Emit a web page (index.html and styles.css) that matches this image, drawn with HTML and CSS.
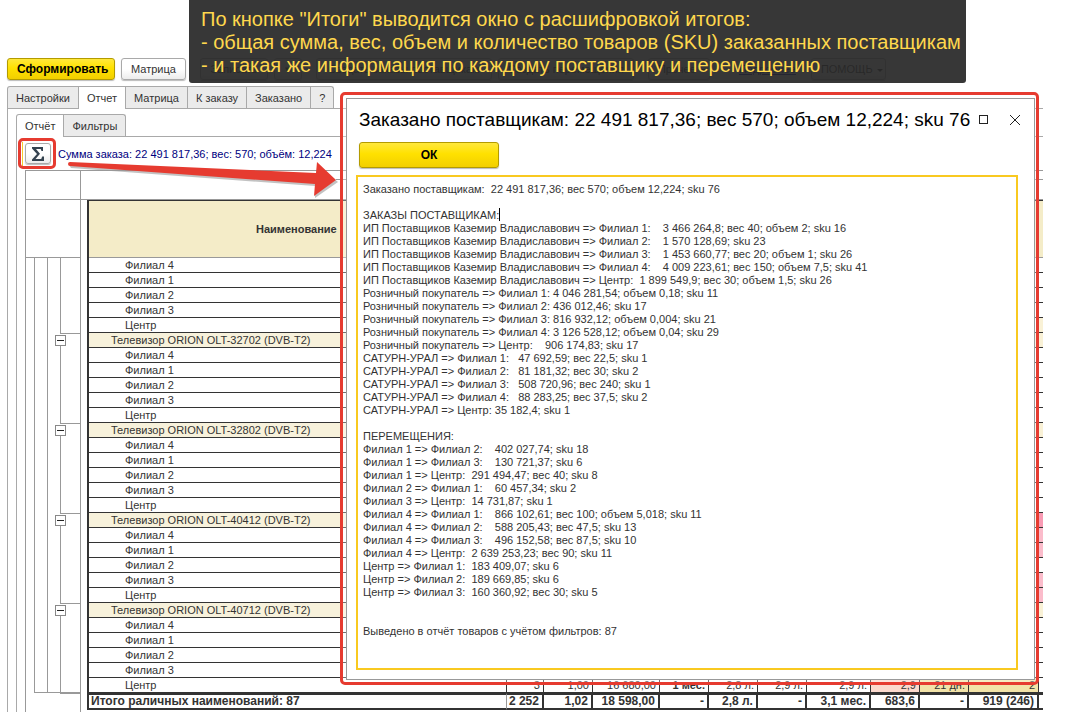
FILE: index.html
```html
<!DOCTYPE html>
<html lang="ru">
<head>
<meta charset="utf-8">
<title>Отчет</title>
<link rel="stylesheet" href="styles.css">
</head>
<body>
<main class="app">
  <div class="toolbar">
    <button class="btn primary generate">Сформировать</button>
    <button class="btn">Матрица</button>
    <button class="btn save">Записать</button>
    <button class="btn small">▾</button>
    <button class="btn orders">Создать заказы поставщикам</button>
    <button class="btn moves">Создать перемещения</button>
    <button class="btn more">Прочее <span class="caret"></span></button>
    <a class="help-link" href="#">Подробнее</a>
    <button class="btn help">ПОМОЩЬ <span class="caret"></span></button>
  </div>
  <nav class="tabs">
    <button class="tab">Настройки</button><button class="tab active">Отчет</button><button class="tab">Матрица</button><button class="tab">К заказу</button><button class="tab">Заказано</button><button class="tab">?</button>
  </nav>
  <section class="panel">
    <nav class="tabs inner">
      <button class="tab active">Отчёт</button><button class="tab">Фильтры</button>
    </nav>
    <section class="panel inner">
      <div class="summary">
        <span class="marker"></span>
        <button class="btn sigma" aria-label="Итоги"><svg width="16" height="16" viewBox="0 0 16 16"><path d="M2 1h11v4h-1.500l-.8-2H6l4 4.800L5.500 13h5.700l1-2.500H14V15H2v-1.500L7 8 2 2.500z" fill="#34424f"/></svg></button>
        <span class="sum-text">Сумма заказа: 22 491 817,36; вес: 570; объём: 12,224</span>
      </div>
      <div class="report">
        <div class="outline">
          <div class="outline-top"></div>
          <div class="outline-head"></div>
          <div class="tree">
            <div class="level"></div><div class="level"></div>
            <div class="nodes">
              <div class="node first"></div>
              <div class="node"><button class="toggle" aria-label="Свернуть"></button></div>
              <div class="node"><button class="toggle" aria-label="Свернуть"></button></div>
              <div class="node"><button class="toggle" aria-label="Свернуть"></button></div>
              <div class="node"><button class="toggle" aria-label="Свернуть"></button></div>
            </div>
          </div>
        </div>
        <div class="sheet">
          <div class="ruler"><div class="bracket"></div></div>
          <table class="grid">
            <colgroup><col class="c-name"><col class="c37"><col class="c49"><col class="c67"><col class="c49"><col class="c49"><col class="c49"><col class="c64"><col class="c49"><col class="c49"><col class="c70"><col class="c4"></colgroup>
            <thead><tr><th colspan="11">Наименование</th><th></th></tr></thead>
            <tbody id="rows"></tbody>
            <tfoot><tr><td class="name">Итого раличных наименований: 87</td><td>2 252</td><td>1,02</td><td>18 598,00</td><td>-</td><td>2,8 л.</td><td>-</td><td>3,1 мес.</td><td>683,6</td><td>-</td><td>919 (246)</td><td></td></tr></tfoot>
          </table>
        </div>
      </div>
    </section>
  </section>
</main>

<aside class="callout">По кнопке "Итоги" выводится окно с расшифровкой итогов:<br>- общая сумма, вес, объем и количество товаров (SKU) заказанных поставщикам<br>- и такая же информация по каждому поставщику и перемещению</aside>

<div class="focus-ring"></div>
<svg class="arrow" width="280" height="50" viewBox="0 0 280 50">
  <path d="M2 9 249 19 251 9 271 26 248 42 248 30 4 12z" fill="#999" opacity=".6"/>
  <path d="M3 6Q1 6 1 8T3 10L248 28 247 40 269 24 250 6 249 17z" fill="#e63b30"/>
</svg>

<div class="frame" role="dialog" aria-labelledby="dialog-title">
  <div class="dialog">
    <header class="dialog-head">
      <h1 id="dialog-title">Заказано поставщикам: 22 491 817,36; вес 570; объем 12,224; sku 76</h1>
      <button class="win" aria-label="Развернуть"><svg width="10" height="10"><rect x=".5" y=".5" width="8" height="8" fill="none" stroke="#222"/></svg></button>
      <button class="win" aria-label="Закрыть"><svg width="10" height="10"><path d="M0 0 10 10M10 0 0 10" stroke="#222"/></svg></button>
    </header>
    <button class="btn primary ok">ОК</button>
    <div class="field">
    <textarea class="details" aria-label="Расшифровка итогов" spellcheck="false">Заказано поставщикам:  22 491 817,36; вес 570; объем 12,224; sku 76

ЗАКАЗЫ ПОСТАВЩИКАМ:
ИП Поставщиков Каземир Владиславович => Филиал 1:    3 466 264,8; вес 40; объем 2; sku 16
ИП Поставщиков Каземир Владиславович => Филиал 2:    1 570 128,69; sku 23
ИП Поставщиков Каземир Владиславович => Филиал 3:    1 453 660,77; вес 20; объем 1; sku 26
ИП Поставщиков Каземир Владиславович => Филиал 4:    4 009 223,61; вес 150; объем 7,5; sku 41
ИП Поставщиков Каземир Владиславович => Центр:  1 899 549,9; вес 30; объем 1,5; sku 26
Розничный покупатель => Филиал 1: 4 046 281,54; объем 0,18; sku 11
Розничный покупатель => Филиал 2: 436 012,46; sku 17
Розничный покупатель => Филиал 3: 816 932,12; объем 0,004; sku 21
Розничный покупатель => Филиал 4: 3 126 528,12; объем 0,04; sku 29
Розничный покупатель => Центр:    906 174,83; sku 17
САТУРН-УРАЛ => Филиал 1:   47 692,59; вес 22,5; sku 1
САТУРН-УРАЛ => Филиал 2:   81 181,32; вес 30; sku 2
САТУРН-УРАЛ => Филиал 3:   508 720,96; вес 240; sku 1
САТУРН-УРАЛ => Филиал 4:   88 283,25; вес 37,5; sku 2
САТУРН-УРАЛ => Центр: 35 182,4; sku 1

ПЕРЕМЕЩЕНИЯ:
Филиал 1 => Филиал 2:    402 027,74; sku 18
Филиал 1 => Филиал 3:    130 721,37; sku 6
Филиал 1 => Центр:  291 494,47; вес 40; sku 8
Филиал 2 => Филиал 1:    60 457,34; sku 2
Филиал 3 => Центр:  14 731,87; sku 1
Филиал 4 => Филиал 1:    866 102,61; вес 100; объем 5,018; sku 11
Филиал 4 => Филиал 2:    588 205,43; вес 47,5; sku 13
Филиал 4 => Филиал 3:    496 152,58; вес 87,5; sku 10
Филиал 4 => Центр:  2 639 253,23; вес 90; sku 11
Центр => Филиал 1:  183 409,07; sku 6
Центр => Филиал 2:  189 669,85; sku 6
Центр => Филиал 3:  160 360,92; вес 30; sku 5


Выведено в отчёт товаров с учётом фильтров: 87</textarea>
    <span class="cursor"></span>
    </div>
  </div>
</div>
<script src="report.js"></script>
</body>
</html>
```

FILE: report.js
```js
const branches = ["Филиал 4", "Филиал 1", "Филиал 2", "Филиал 3", "Центр"];
const models = ["OLT-32702", "OLT-32802", "OLT-40412", "OLT-40712"];
const tints = { 4: "cream", 5: "cream", 11: "cream", 17: "rose", 18: "pink", 19: "pink", 21: "pink", 22: "pink", 23: "cream" };
const lastValues = ["3", "1,00", "16 680,00", "1 мес.", "2,8 л.", "2,9 л.", "2,9 л.", "2,9", "21 дн.", "2"];
const body = document.getElementById("rows");

function addRow(name, kind, values) {
  const tr = document.createElement("tr");
  tr.className = kind;
  const cell = tr.insertCell();
  cell.className = "name";
  cell.textContent = name;
  if (values) {
    values.forEach((v) => { tr.insertCell().textContent = v; });
  } else {
    tr.insertCell().colSpan = 10;
  }
  tr.insertCell().className = tints[body.rows.length] || "";
  body.append(tr);
}

branches.forEach((b) => addRow(b, "leaf"));
models.forEach((m, i) => {
  addRow("Телевизор ORION " + m + " (DVB-T2)", "product");
  branches.forEach((b, j) => {
    const last = i === models.length - 1 && j === branches.length - 1;
    addRow(b, last ? "leaf last" : "leaf", last ? lastValues : null);
  });
});
```

FILE: styles.css
```css
* { box-sizing: border-box; }
body {
  margin: 0;
  position: relative;
  height: 100vh;
  overflow: hidden;
  background: #fff;
  color: #333;
  font: 11px/16px "Liberation Sans", Arial, sans-serif;
}
button { font: inherit; color: inherit; margin: 0; padding: 0; }
.app { padding: 58px 33px 0 7px; height: 100%; overflow: hidden; }

.toolbar { display: flex; gap: 6px; height: 22px; }
.btn {
  flex: none;
  height: 22px;
  padding: 0 9px;
  border: 1px solid #a9a9a9;
  border-radius: 3px;
  background: linear-gradient(#fff 50%, #ececec);
  box-shadow: 0 1px 1px #bbb;
  white-space: nowrap;
  overflow: hidden;
}
.btn.primary {
  border-color: #b39b00;
  background: linear-gradient(#ffe83c, #ffe100 45%, #f2cf00);
  color: #000;
  font-size: 12px;
  font-weight: bold;
}
.generate { width: 108px; }
.save { width: 68px; margin-left: 8px; }
.small { width: 28px; }
.orders { width: 176px; margin-left: 8px; }
.moves { width: 136px; }
.more { width: 62px; margin-left: 8px; }
.help-link { align-self: center; width: 56px; margin: 0 10px 0 23px; color: #00a; }
.btn.help { width: 75px; }
.caret { display: inline-block; margin-left: 1px; border: 3px solid transparent; border-top-color: #333; border-bottom: 0; vertical-align: middle; }

.tabs { display: flex; height: 22px; margin-top: 6px; }
.tab {
  height: 22px;
  padding: 0 8px;
  border: 1px solid #a9a9a9;
  border-left-width: 0;
  border-bottom: 0;
  background: #ebebeb;
  white-space: nowrap;
}
.tab:first-child { border-left-width: 1px; border-top-left-radius: 3px; }
.tab:last-child { border-top-right-radius: 3px; }
.tab.active { height: 23px; background: #fff; z-index: 1; }
.panel { border: 1px solid #a9a9a9; border-width: 1px 0 0 1px; padding-left: 8px; }
.panel.inner { padding-left: 0; }
.tabs.inner { margin-top: 5px; }

.summary { display: flex; align-items: center; height: 33px; padding-left: 5px; }
.marker { width: 1px; height: 24px; background: #f7c92b; }
.sigma { width: 26px; height: 21px; margin: 0 7px 0 2px; padding: 0; display: grid; place-items: center; }
.sum-text { color: #000080; white-space: nowrap; }

.report { display: flex; margin-left: 8px; border: 1px solid #999; border-width: 1px 0 0 1px; }
.outline { flex: none; width: 55px; height: 545px; border-right: 1px solid #999; }
.outline-top { height: 29px; border-bottom: 1px solid #999; }
.outline-head { height: 58px; border-bottom: 1px solid #999; }
.tree { display: flex; height: 435px; padding-left: 8px; }
.level { width: 13px; border: 1px solid #999; border-width: 0 0 1px 1px; }
.nodes { flex: 1; border-bottom: 1px solid #999; }
.node { height: 90px; padding-top: 2px; }
.node.first { height: 75px; padding: 0; }
.node::after { content: ""; display: block; height: 77px; border: 1px solid #999; border-width: 0 0 1px 1px; }
.node.first::after { height: 75px; }
.toggle {
  display: grid;
  place-items: center;
  width: 11px;
  height: 11px;
  margin-left: -5px;
  border: 1px solid #888;
  background: #fff;
}
.toggle::before { content: ""; width: 7px; height: 1px; background: #222; }

.sheet { flex: 1; min-width: 0; }
.ruler { height: 29px; border-bottom: 1px solid #999; padding: 8px 0 0 255px; }
.bracket { border-top: 1px solid #999; }
.grid {
  width: calc(100% - 6px);
  margin-left: 6px;
  table-layout: fixed;
  border-collapse: separate;
  border-spacing: 0;
  border-left: 2px solid #333;
  line-height: 14px;
}
.c37 { width: 37px; } .c49 { width: 49px; } .c67 { width: 67px; }
.c64 { width: 64px; } .c70 { width: 70px; } .c4 { width: 4px; }
th { height: 58px; padding: 0 0 0 167px; text-align: left; background: #f4ecc8; border-top: 1px solid #333; border-bottom: 1px solid #999; }
th:last-child { padding: 0; }
td { height: 15px; padding: 0 3px 0 0; border-bottom: 1px solid #333; border-right: 1px solid #333; text-align: right; white-space: nowrap; overflow: hidden; }
td:last-child { border-right: 0; padding: 0; }
td.name { text-align: left; padding-left: 36px; }
.product td { background: #f7f1db; }
.product td.name { padding-left: 22px; }
tbody .cream, .product .cream { background: #f9f1d6; }
tbody .rose, .product .rose { background: #f99bb4; }
tbody .pink { background: #fbbccb; }
.last td:nth-child(5) { font-weight: bold; }
.last td:nth-child(9) { background: #fbd9cd; }
.last td:nth-child(10), .last td:nth-child(11) { background: #f2e3a8; }
tfoot td { height: 17px; border-top: 2px solid #333; border-bottom: 2px solid #333; border-right-width: 2px; font-size: 12px; line-height: 13px; font-weight: bold; }
tfoot td.name { padding-left: 2px; border-right: 1px solid #999; }

.callout {
  position: absolute;
  left: 189px;
  top: 0;
  padding: 8px 5px 6px 12px;
  border-radius: 0 0 3px 3px;
  background: rgba(40, 40, 40, .93);
  color: #ffd84d;
  font-size: 20px;
  line-height: 23px;
  white-space: nowrap;
}
.focus-ring { position: absolute; left: 18px; top: 138px; width: 38px; height: 31px; border: 3px solid #e63b30; border-radius: 5px; }
.arrow { position: absolute; left: 67px; top: 156px; }
.frame {
  position: absolute;
  left: 340px;
  top: 92px;
  right: 37px;
  bottom: 27px;
  padding: 3px 1px 2px 3px;
  border: 3px solid #e63b30;
  border-radius: 5px;
  background: rgba(255, 255, 255, .3);
}
.dialog { display: flex; flex-direction: column; height: 100%; border: 1px solid #999; background: #fff; padding: 7px 4px 9px 9px; color: #000; }
.dialog-head { display: flex; align-items: center; height: 28px; padding-left: 3px; }
h1 { flex: 1; min-width: 0; margin: 0; font-size: 19px; line-height: 24px; font-weight: normal; white-space: nowrap; }
.win { flex: none; border: 0; background: none; width: 31px; height: 24px; display: grid; place-items: center; }
.ok { width: 140px; height: 26px; margin: 8px 0 7px 3px; }
.field { position: relative; flex: 1; display: flex; margin-right: 12px; }
.details {
  flex: 1;
  padding: 6px 5px;
  border: 2px solid #f9c920;
  outline: 0;
  resize: none;
  overflow: hidden;
  color: #333;
  font: 11px/13px "Liberation Sans", Arial, sans-serif;
}
.cursor { position: absolute; left: 143px; top: 33px; width: 1px; height: 13px; background: #000; }
```
